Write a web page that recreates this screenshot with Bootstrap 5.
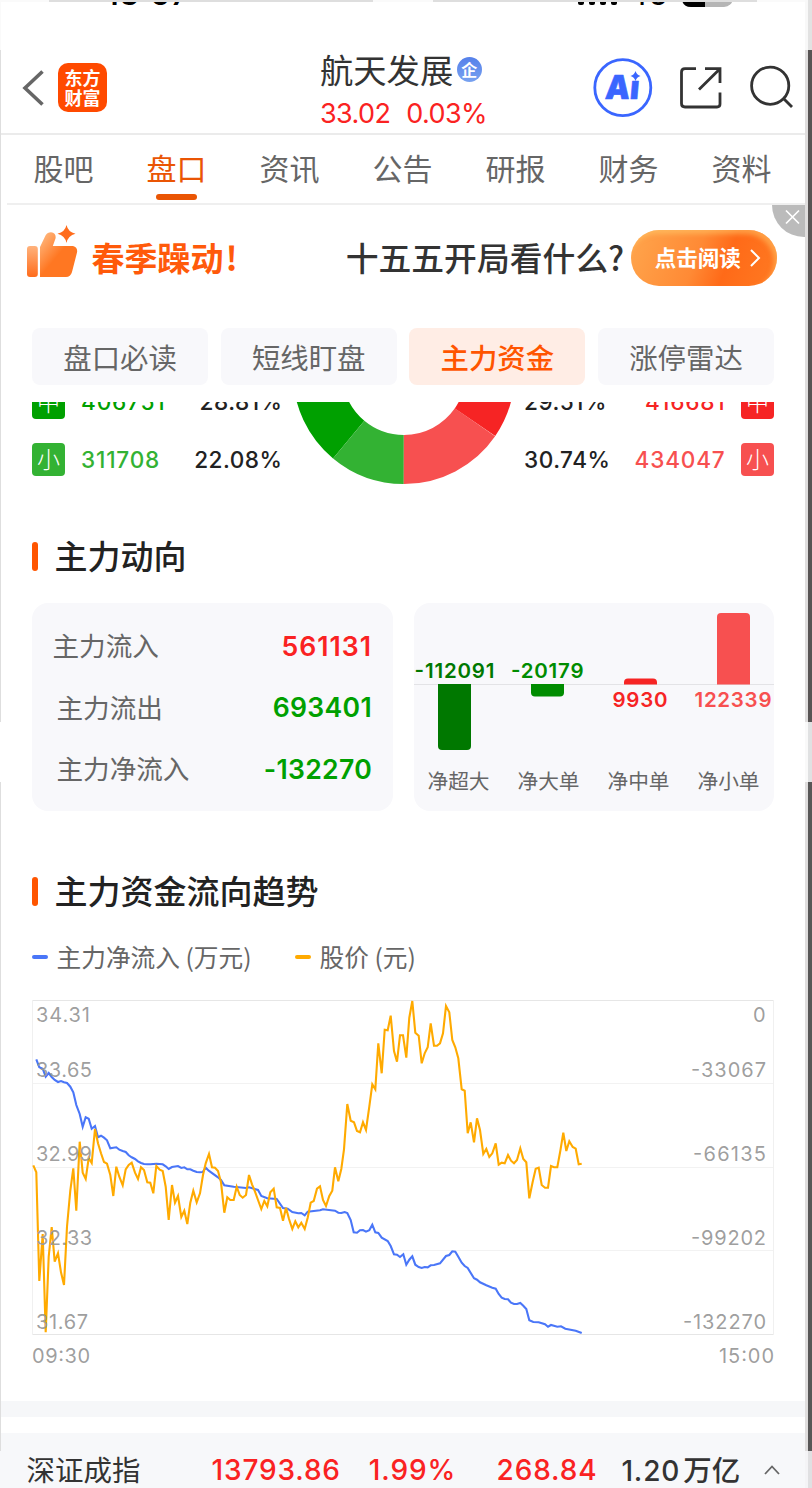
<!DOCTYPE html>
<html lang="zh-CN">
<head>
<meta charset="utf-8">
<meta name="viewport" content="width=device-width, initial-scale=1">
<title>航天发展</title>
<link href="https://cdn.jsdelivr.net/npm/bootstrap@5.3.0/dist/css/bootstrap.min.css" rel="stylesheet">
<style>
body{font-family:Inter,"Noto Sans CJK SC",sans-serif;color:#222;background:#fff;line-height:1;overflow:hidden}
svg{display:block;flex:none}
.screen{display:grid;grid-template-columns:1px 804px 3px 4px;height:1488px;overflow:hidden}
.edge-l{background:linear-gradient(#fafafa 0 50px,#dedede 50px 722px,#fff 722px 782px,#dedede 782px 1451px,#f7f8fa 1451px)}
.edge-m{background:linear-gradient(#f8f8f8 0 50px,#dfdddd 50px 722px,#f9f9f9 722px 782px,#dfdddd 782px 1451px,#f4f4f6 1451px)}
.edge-r{background:linear-gradient(#e2e2e2 0 50px,#585454 50px 722px,#e0e1e2 722px 782px,#585757 782px 1451px,#e0e0e2 1451px)}
.cn{font-family:"Noto Sans CJK SC",sans-serif}
.statusbar{height:50px}
.topbar{height:85px;border-bottom:2px solid #ebebeb;padding-left:21px}
.applogo{width:49px;height:49px;border-radius:10px;background:#ff4a00;color:#fff;font-size:18px;line-height:20px;font-weight:700;margin-left:14px;padding-top:4px;text-align:center}
.stock{width:174px;margin-left:213px}
.stock-name{font-size:33.3px;line-height:38px;color:#333;font-weight:400}
.corp{width:25px;height:25px;border-radius:50%;background:linear-gradient(#5580ea,#78a2f0);color:#fff;font-size:16px;line-height:24px;font-weight:700;margin:1px 0 0 3.5px}
.quote-row{font-size:27px;line-height:34px;color:#fa2222;gap:16px;margin-top:9px;letter-spacing:-.6px}
.tabs{height:70px;margin-left:6px;border-bottom:2px solid #efefef}
.tabs .tab{width:113px;flex:none;font-size:30px;line-height:43px;padding-top:11px;color:#666;text-align:center;text-decoration:none}
.tabs .on{color:#ea5504}
.tabs .on::after{content:"";display:block;width:41px;height:6px;border-radius:3px;background:#ea5504;margin:5px auto 0}
.banner{height:107px;padding-left:25px}
.slogan{font-size:33px;font-weight:700;color:#ff5a0a;margin-left:13.5px;margin-top:-2px}
.ask{font-size:32.8px;font-weight:500;color:#333;margin-left:108px;margin-top:-2px}
.cta{width:146px;height:56px;border-radius:28px;font-size:21.5px;font-weight:700;color:#fff;background:linear-gradient(110deg,#ffa64d,#ff8a35 45%,#ff6a18 65%,#ff7a22);box-shadow:inset -3px 4px 5px #ffd07080;margin-left:6.5px;margin-top:-1px;padding-left:24px}
.cta span{margin-top:-2px}
.banner-x{right:0;top:0;width:33px;height:32px;border-radius:0 0 0 33px;background:#bbb}
.chips{height:90px;padding:16px 31px 0;gap:12.6px}
.chips .chip{height:57px;flex:1;border-radius:8px;background:#f8f8fb;color:#666;font-size:28.4px;line-height:57px;text-align:center;text-decoration:none}
.chips .on{background:#ffede5;color:#ff5500;font-weight:500}
.split{height:116px;padding:0 31px;overflow:hidden;font-size:22.6px;font-weight:500;letter-spacing:.5px}
.split .side{margin-top:-16px;gap:24px}
.split .side>div{height:33px}
.split .num{letter-spacing:.8px}
.tag{width:33px;height:33px;border-radius:4px;color:#fff;font-size:23px;line-height:31px;font-weight:300;text-align:center;letter-spacing:0}
.sec{padding-left:31px;height:40px;font-size:33px;font-weight:500;color:#222}
.sec::before{content:"";width:6px;height:29px;border-radius:3px;background:#ff5500;margin-right:16.5px}
.sec span{margin-top:-1px}
.panel{height:208px;border-radius:16px;background:#f8f8fb}
.flow{width:361px;padding:12.500px 21px}
.flow>div{height:61.5px;font-size:26.6px}
.flow .cn{color:#666;margin:-1px 0 0 -.5px}
.flow b{font-weight:600;font-size:26.6px;letter-spacing:.3px}
.legend{height:32px;padding-left:31px;font-size:24.7px;color:#666}
.legend i{width:16px;height:4px;border-radius:2px;margin-right:8.5px}
.legend span{margin-top:-2px}
.band{height:16px;background:#f6f7f9}
.index{height:55px;margin-top:16px;background:#f7f8fa;padding:18px 0 0 25.5px;font-size:28px;letter-spacing:.85px;font-weight:500;line-height:38px;color:#fa2222}
.index .cn{font-size:28.5px;color:#333;letter-spacing:0;line-height:35px}
.red{color:#fa2222}.green{color:#00a000}
</style>
</head>
<body>
<div class="screen">
<div class="edge-l"></div>
<main>
  <svg class="statusbar" width="804" height="50" viewBox="1 0 804 50">
    <path d="M1 0h804v2H1z" fill="#fafafa"/><path d="M49 0h324v2H49zM433 0h324v2H433z" fill="#dedede"/>
    <clipPath id="c"><path d="M0 2h812v20H0z"/></clipPath>
    <g clip-path="url(#c)"><text x="106" y="5" font-size="30" font-weight="600" textLength="82">13:57</text>
    <g><rect x="578" y="-4" width="6" height="9" rx="2"/><rect x="589" y="-8" width="6" height="13" rx="2"/><rect x="600" y="-12" width="6" height="17" rx="2"/><rect x="611" y="-16" width="6" height="21" rx="2"/></g>
    <text x="631" y="4.500" font-size="24" font-weight="600" textLength="36">4G</text>
    <rect x="682" y="-17" width="51" height="24" rx="9" fill="#b5b5b5"/><path d="M705-17h-14q-9 0-9 9v6q0 9 9 9h14z"/></g>
  </svg>
  <header class="topbar d-flex align-items-start">
    <svg width="22" height="40" style="margin-top:18px" viewBox="0 0 22 40" fill="none" stroke="#666" stroke-width="3.6"><path d="M20.500 3.500 3 20l17.500 16.500"/></svg>
    <div class="applogo cn" style="margin-top:12.500px">东方<br>财富</div>
    <div class="stock">
      <div class="d-flex align-items-center stock-name cn text-nowrap">航天发展<span class="corp text-center">企</span></div>
      <div class="quote-row d-flex"><span>33.02</span><span>0.03%</span></div>
    </div>
    <svg width="204" height="64" viewBox="590 55 204 64" style="margin:5px 0 0 96px" fill="none" stroke="#333" stroke-width="2.800">
      <circle cx="622.800" cy="87.700" r="28" stroke="#3a66ff"/>
      <text transform="translate(604.500 98.500) skewX(-5)" font-size="33" font-weight="900" fill="#3a66ff" stroke="#3a66ff" stroke-width=".6" stroke-linejoin="round" textLength="34" lengthAdjust="spacingAndGlyphs">Aı</text>
      <path d="M635.500 71q1.200 3.800 5 5-3.800 1.200-5 5-1.200-3.800-5-5 3.800-1.200 5-5z" fill="#3a66ff" stroke="none"/>
      <path d="M696 68.700h-11q-3.500 0-3.500 3.500v31.300q0 3.500 3.500 3.500h32q3 0 3-3V92.500M705 68.700h15V83M720 68.700 699 89.500"/>
      <circle cx="770.200" cy="85.700" r="18.600"/><path d="m783 98 9 9"/>
    </svg>
  </header>
  <nav class="tabs d-flex cn"><a class="tab">股吧</a><a class="tab on">盘口</a><a class="tab">资讯</a><a class="tab">公告</a><a class="tab">研报</a><a class="tab">财务</a><a class="tab">资料</a></nav>
  <section class="banner cn d-flex align-items-center position-relative text-nowrap">
    <svg width="52" height="56" viewBox="26 224 52 56" style="margin-top:-13px">
      <defs><linearGradient id="g" x1="0" y1="0" x2="1" y2="1"><stop stop-color="#ffc08a"/><stop offset=".5" stop-color="#ff7722"/></linearGradient><linearGradient id="h" x1="0" y1="0" x2="0" y2="1"><stop stop-color="#ffb27c"/><stop offset="1" stop-color="#ff6c1c"/></linearGradient></defs>
      <rect x="27" y="246" width="10.800" height="31" rx="3" fill="url(#h)"/>
      <path d="M40 277V247l5.500-11.500q2-3.300 5.500-3.300 5.500 1 4.500 6.300l-2.700 7.500H73q5 1.500 4 6.500l-5 19.500q-1.500 5-6 5z" fill="url(#g)"/>
      <path d="M66.500 225q1.500 7 9 8.700-7.500 1.700-9 9.300-1.500-7.600-9-9.300 7.500-1.700 9-8.700z" fill="#ff6c1c"/>
    </svg>
    <span class="slogan">春季躁动<span style="margin-left:2px">!</span></span>
    <span class="ask">十五五开局看什么?</span>
    <a class="cta d-flex align-items-center text-decoration-none"><span>点击阅读</span><svg width="12" height="18" viewBox="0 0 12 18" class="ms-2" fill="none" stroke="#fff" stroke-width="2"><path d="m2 1 8 8-8 8"/></svg></a>
    <div class="banner-x position-absolute"><svg width="33" height="32" stroke="#fff" stroke-width="1.700"><path d="m14 5.500 13 13M27 5.500l-13 13"/></svg></div>
  </section>
  <nav class="chips d-flex cn"><a class="chip">盘口必读</a><a class="chip">短线盯盘</a><a class="chip on">主力资金</a><a class="chip">涨停雷达</a></nav>

  <section class="split d-flex">
    <div class="side d-flex flex-column" style="width:250.500px">
      <div class="d-flex align-items-center"><span class="tag cn" style="background:#00a000">中</span><span class="num" style="color:#00a000;margin-left:16px">406751</span><span class="ms-auto">28.81%</span></div>
      <div class="d-flex align-items-center"><span class="tag cn" style="background:#33b233">小</span><span class="num" style="color:#33b233;margin:1px 0 0 16px">311708</span><span class="ms-auto" style="margin-top:1px">22.08%</span></div>
    </div>
    <svg width="222" height="90" viewBox="293 402 222 90" style="margin-left:10.500px">
      <g fill="none" stroke-width="49"><path d="M317.500 373.200A86.300 86.300 0 0 0 348.700 439.600" stroke="#00a000"/><path d="M348.700 439.600A86.300 86.300 0 0 0 403.800 459.500" stroke="#33b233"/><path d="M475 422.300A86.300 86.300 0 0 0 490 373.200" stroke="#f62424"/><path d="M403.800 459.500A86.300 86.300 0 0 0 475 422.300" stroke="#f75050"/></g>
    </svg>
    <div class="side d-flex flex-column" style="width:250px;margin-left:9px">
      <div class="d-flex align-items-center"><span>29.51%</span><span class="ms-auto num" style="color:#f62424;margin-right:15.500px">416681</span><span class="tag cn" style="background:#f62424">中</span></div>
      <div class="d-flex align-items-center"><span style="margin-top:1px">30.74%</span><span class="ms-auto num" style="color:#f75050;margin:1px 15.500px 0 0">434047</span><span class="tag cn" style="background:#f75050">小</span></div>
    </div>
  </section>

  <h2 class="sec cn d-flex align-items-center m-0" style="margin-top:18px!important"><span>主力动向</span></h2>
  <section class="d-flex" style="gap:21px;padding:27px 31px 0">
    <div class="panel flow">
      <div class="d-flex align-items-center justify-content-between"><span class="cn">主力流入</span><b class="red" style="letter-spacing:1px">561131</b></div>
      <div class="d-flex align-items-center justify-content-between"><span class="cn ps-1">主力流出</span><b class="green">693401</b></div>
      <div class="d-flex align-items-center justify-content-between"><span class="cn ps-1">主力净流入</span><b class="green">-132270</b></div>
    </div>
    <svg class="panel" width="360" height="208" viewBox="414 603 360 208">
      <path d="M414 684.500h360" stroke="#e3e3e6"/>
      <path d="M438 684h33v62q0 4-4 4h-25q-4 0-4-4z" fill="#007800"/><path d="M531 684h33v8.500q0 4-4 4h-25q-4 0-4-4z" fill="#008c00"/>
      <path d="M624 684.500v-2q0-4 4-4h25q4 0 4 4v2z" fill="#f62424"/><path d="M717 684.500V617q0-4 4-4h25q4 0 4 4v67.500z" fill="#f75050"/>
      <g font-size="20.500" font-weight="600"><text x="414.500" y="678" textLength="80" fill="#007800">-112091</text><text x="511" y="678" textLength="72.500" fill="#008c00">-20179</text><text x="612.500" y="706.500" textLength="55" fill="#f62424">9930</text><text x="694.500" y="706.500" textLength="77" fill="#f75050">122339</text></g>
      <g class="cn" font-size="20.700" fill="#666" text-anchor="middle"><text x="458.500" y="788.500">净超大</text><text x="548.500" y="788.500">净大单</text><text x="638.500" y="788.500">净中单</text><text x="728.500" y="788.500">净小单</text></g>
    </svg>
  </section>

  <h2 class="sec cn d-flex align-items-center m-0" style="margin-top:60px!important"><span>主力资金流向趋势</span></h2>
  <div class="legend cn d-flex align-items-center text-nowrap" style="margin-top:30px"><i style="background:#4a76f8"></i><span>主力净流入 (万元)</span><i style="background:#ffaa00;margin-left:43.500px"></i><span>股价 (元)</span></div>
  <svg width="804" height="394" viewBox="1 975 804 394" id="trend" style="margin-top:2px">
    <path d="M32 1000.500h742M32 1334.500h742" stroke="#e6e6e6"/><path d="M32 1083.500h742M32 1167.500h742M32 1250.500h742" stroke="#f2f2f2"/><path d="M32.500 1000v335M773.500 1000v335" stroke="#f0f0f0"/>
    <g fill="none" stroke-width="2.100" stroke-linejoin="miter"><polyline id="net" stroke="#4a76f8"/><polyline id="pricel" stroke="#ffaa00"/></g>
    <g font-size="20" fill="#999" fill-opacity=".95">
      <text x="36" y="1021.500" textLength="54">34.31</text><text x="36" y="1077" textLength="56">33.65</text><text x="36" y="1161" textLength="56">32.99</text><text x="36" y="1244.700" textLength="56">32.33</text><text x="36" y="1328.500" textLength="52">31.67</text>
      <text x="753" y="1021.500" textLength="13">0</text><text x="691" y="1077" textLength="75">-33067</text><text x="693" y="1161" textLength="73">-66135</text><text x="691" y="1244.700" textLength="75">-99202</text><text x="683" y="1328.500" textLength="83">-132270</text>
      <text x="32" y="1363" textLength="58">09:30</text><text x="719" y="1363" textLength="55">15:00</text>
    </g>
  </svg>
  <div class="band" style="margin-top:32px"></div>
  <footer class="index d-flex text-nowrap"><span class="cn fw-normal">深证成指</span><span style="margin-left:71px">13793.86</span><span style="margin-left:28px">1.99%</span><span style="margin-left:40.500px">268.84</span><span style="margin-left:24px;color:#333">1.20<span class="cn" style="margin-left:3px">万亿</span></span>
  <svg class="ms-auto" width="18" height="12" viewBox="0 0 18 12" style="margin:13px 24px 0 0" fill="none" stroke="#666" stroke-width="1.800"><path d="m2 10 7-7.500 7 7.500"/></svg></footer>
</main>
<div class="edge-m"></div><div class="edge-r"></div>
</div>
<script src="https://cdn.jsdelivr.net/npm/bootstrap@5.3.0/dist/js/bootstrap.bundle.min.js"></script>
<script>
// Series are stored in thirds of a pixel, split in three stretches of the trading day.
const series={
 pricel:[[0,"40,556;49,577;58,903;68,762;77,1057;86,830;95,741;104,845;114,820;123,877;132,915;141,740;151,632;160,565;169,692;179,485;188,578;197,597;206,534;215,549;225,447;234,490;243,520;252,546;261,551;271,585;280,648;289,560;298,590;308,616;317,568;326,555;335,548;345,578;354,597;363,562;372,570;382,607;391,608;400,640;409,558;419,569;428,573;437,620;446,720;456,615;465,668;474,648;484,711;493,692;502,732;511,668;520,632;530,667"],
 [540,"0,640;9,585;17,550;27,522;36,562;45,563;54,573;63,607;73,698;82,652;91,660;101,660;110,620;119,645;128,653;138,645;147,585;156,613;165,635;174,660;184,687;193,663;202,679;211,637;221,626;230,682;240,684;249,722;258,683;267,717;277,747;286,724;295,742;304,728;314,747;323,713;332,668;341,663;351,626;360,619;369,660;378,678;388,648;397,632;405,562;415,604;424,567;432,508;442,372;452,422;462,427;471,453;480,457;489,427;498,450;508,380;517,313;526,328;535,190;545,280;554,149;563,151"],
 [1110,"2,107;12,213;21,245;30,166;39,166;49,233;58,113;67,63;76,158;86,167;95,250;104,220;113,202;122,130;132,197;141,197;150,190;159,160;168,78;178,97;187,180;196,202;205,235;215,328;224,332;233,460;242,427;252,487;261,415;270,450;280,522;289,507;298,531;307,520;317,490;326,554;335,548;344,550;354,525;363,542;372,550;381,540;391,505;400,537;409,547;418,655;428,605;437,566;446,563;455,615;465,623;474,623;483,558;492,562;502,562;511,513;520,458;529,513;538,484;548,501;557,506;566,553;575,551"]],
 net:[[0,"49,238;58,262;68,266;77,290;86,279;95,291;104,300;114,306;123,303;132,307;141,309;151,320;160,337;169,375;179,402;188,440;197,412;206,416;215,446;225,438;234,472;243,467;252,473;261,481;271,505;280,503;289,502;298,509;308,513;317,516;326,526;335,532;345,537;354,544;363,549;372,552;382,553;391,553;409,551;428,553;437,559;446,567;456,561;474,558;484,564;493,562;502,568;511,568;520,572;530,576;539,577;548,576;557,563;566,572;594,592"],
 [540,"63,600;73,616;101,620;138,624;147,622;174,630;184,648;202,655;230,657;249,684;263,686;277,696;295,700;304,699;314,706;323,695;360,691;369,688;405,692;415,698;424,699;434,696;442,699;452,720;461,757;471,758;480,751;489,750;498,755;508,751;517,734;526,757;535,759;545,773;563,783"],
 [1110,"2,798;12,823;21,824;30,831;40,823;49,854;58,839;67,829;76,854;86,861;95,864;104,861;113,862;122,856;132,855;150,850;168,828;178,825;187,814;196,815;205,830;215,848;224,858;233,864;252,895;261,899;270,907;289,916;307,923;317,926;326,942;335,953;344,957;354,958;363,968;372,972;381,972;391,969;400,977;409,987;418,1021;430,1026;446,1027;465,1033;474,1040;483,1035;502,1040;513,1039;526,1046;557,1052;575,1059"]]
};
for(const id in series){
  document.getElementById(id).setAttribute("points",series[id].flatMap(([dx,s])=>s.split(";").map(p=>{const [x,y]=p.split(",").map(Number);return (20+(x+dx)/3).toFixed(1)+","+(980+y/3).toFixed(1)})).join(" "));
}
</script>
</body>
</html>
